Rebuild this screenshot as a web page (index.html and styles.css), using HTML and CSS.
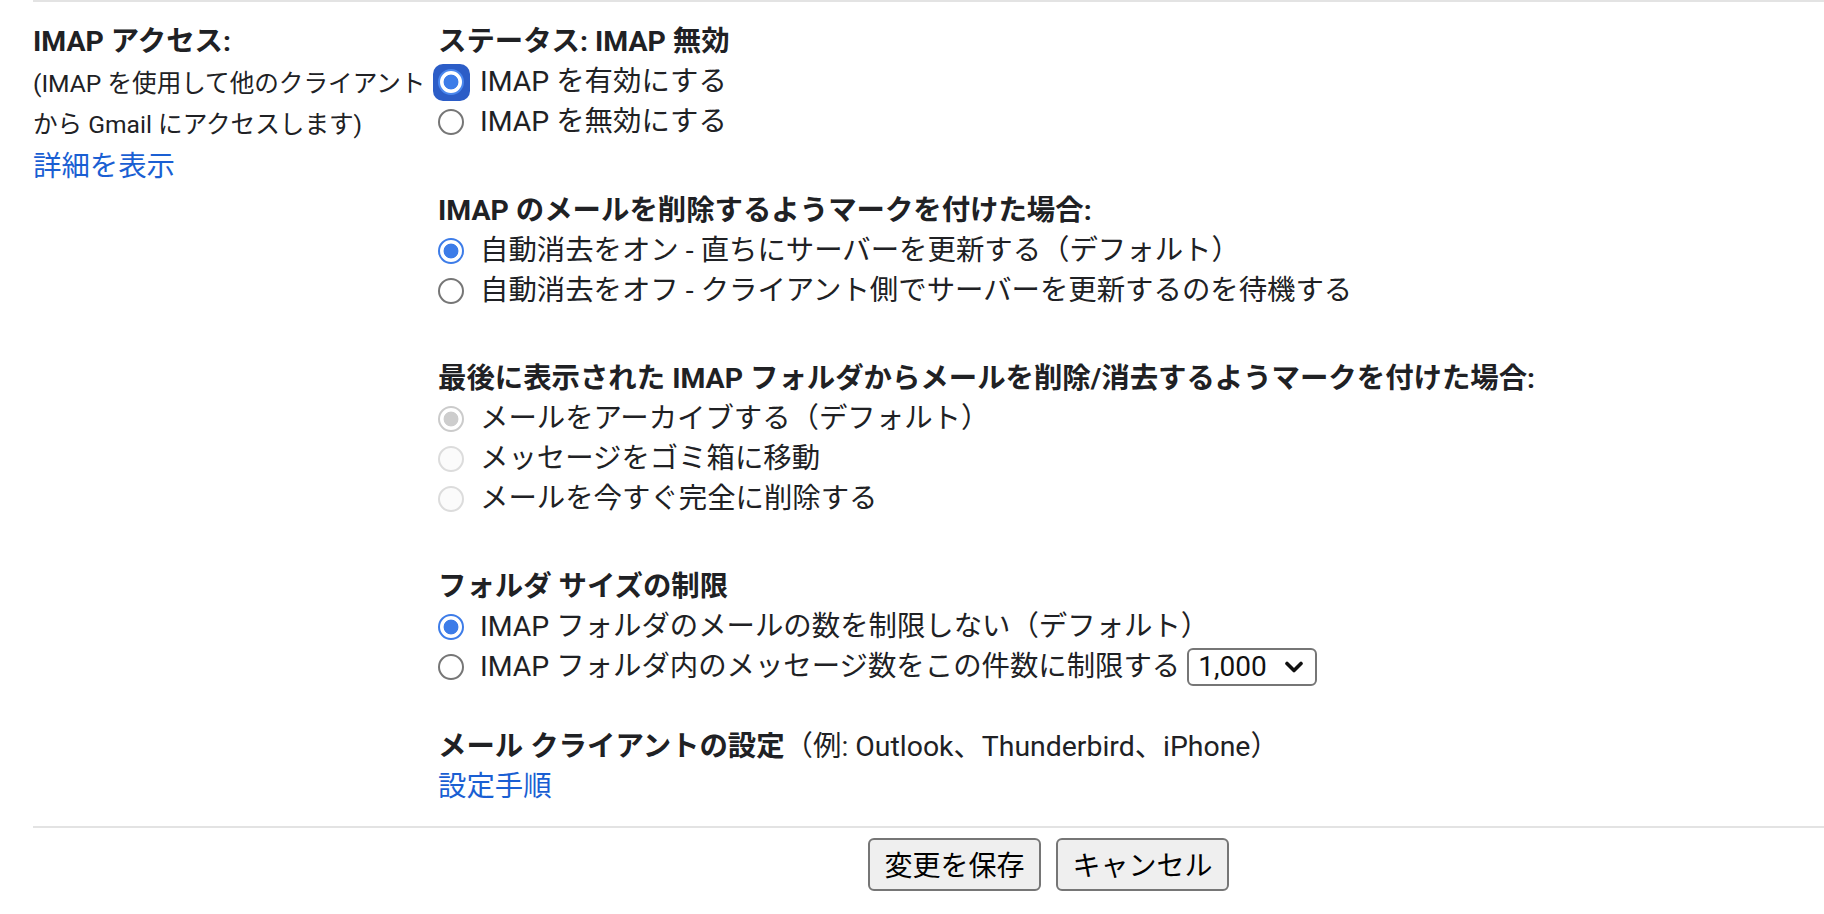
FILE: index.html
```html
<!DOCTYPE html>
<html lang="ja">
<head>
<meta charset="utf-8">
<title>IMAP 設定</title>
<link rel="stylesheet" href="styles.css">
</head>
<body>
<div class="page">
  <div class="setting">
    <div class="label-col">
      <div class="label-title">IMAP アクセス:</div>
      <div class="label-desc">(IMAP を使用して他のクライアント<br>から Gmail にアクセスします)</div>
      <a class="link" href="#">詳細を表示</a>
    </div>
    <div class="value-col">
      <div class="group group-first">
        <div class="heading">ステータス: IMAP 無効</div>
        <div class="opt"><span class="focus"><span class="radio checked"></span></span><span>IMAP を有効にする</span></div>
        <div class="opt"><span class="radio"></span><span>IMAP を無効にする</span></div>
      </div>
      <div class="group">
        <div class="heading">IMAP のメールを削除するようマークを付けた場合:</div>
        <div class="opt"><span class="radio checked"></span><span>自動消去をオン - 直ちにサーバーを更新する（デフォルト）</span></div>
        <div class="opt"><span class="radio"></span><span>自動消去をオフ - クライアント側でサーバーを更新するのを待機する</span></div>
      </div>
      <div class="group">
        <div class="heading">最後に表示された IMAP フォルダからメールを削除/消去するようマークを付けた場合:</div>
        <div class="opt"><span class="radio disabled checked"></span><span>メールをアーカイブする（デフォルト）</span></div>
        <div class="opt"><span class="radio disabled"></span><span>メッセージをゴミ箱に移動</span></div>
        <div class="opt"><span class="radio disabled"></span><span>メールを今すぐ完全に削除する</span></div>
      </div>
      <div class="group group-last">
        <div class="heading">フォルダ サイズの制限</div>
        <div class="opt"><span class="radio checked"></span><span>IMAP フォルダのメールの数を制限しない（デフォルト）</span></div>
        <div class="opt"><span class="radio"></span><span>IMAP フォルダ内のメッセージ数をこの件数に制限する</span>
          <div class="select"><span class="select-value">1,000</span>
            <svg class="chevron" width="18" height="12" viewBox="0 0 18 12"><path d="M2 2.5 L9 9.5 L16 2.5" fill="none" stroke="#111" stroke-width="3.6" stroke-linecap="round" stroke-linejoin="round"/></svg>
          </div>
        </div>
      </div>
      <div class="group client">
        <div class="heading-line"><span class="bold">メール クライアントの設定</span>（例: Outlook、Thunderbird、iPhone）</div>
        <a class="link" href="#">設定手順</a>
      </div>
    </div>
  </div>
  <div class="footer">
    <button class="btn" type="button">変更を保存</button>
    <button class="btn" type="button">キャンセル</button>
  </div>
</div>
</body>
</html>
```

FILE: styles.css
```css
html, body {
  margin: 0;
  padding: 0;
  background: #ffffff;
}

body {
  font-family: Roboto, "Noto Sans CJK JP", sans-serif;
  color: #202124;
}

.page {
  margin-left: 33px;
  border-top: 2px solid #e3e3e3;
}

.setting {
  display: grid;
  grid-template-columns: 405px 1fr;
  padding-top: 20px;
  padding-bottom: 19px;
}

.label-title {
  font-size: 28.4px;
  font-weight: 700;
  line-height: 40px;
}

.label-desc {
  font-size: 24.6px;
  line-height: 41px;
  margin-top: 1px;
}

.link {
  display: block;
  font-size: 28.4px;
  line-height: 40px;
  color: #1a5fd3;
  text-decoration: none;
}

.label-col .link {
  margin-top: 2px;
}

.group {
  margin-bottom: 48px;
}

.group-first {
  margin-bottom: 49px;
}

.group-last {
  margin-bottom: 40px;
}

.client {
  margin-bottom: 0;
}

.heading {
  font-size: 28.4px;
  font-weight: 700;
  line-height: 40px;
}

.heading-line {
  font-size: 28.4px;
  line-height: 40px;
}

.bold {
  font-weight: 700;
}

.opt {
  display: flex;
  align-items: center;
  height: 40px;
  font-size: 28.4px;
  line-height: 40px;
  white-space: nowrap;
}

.radio {
  box-sizing: border-box;
  flex: none;
  width: 26px;
  height: 26px;
  margin-right: 16px;
  border-radius: 50%;
  border: 2px solid #767676;
  background: #ffffff;
}

.radio.checked {
  border-color: #3d7ce8;
  background: radial-gradient(circle, #3d7ce8 0 7px, #ffffff 7.8px);
}

.radio.disabled {
  border-color: #dcdcdc;
  background: #fbfbfb;
}

.radio.disabled.checked {
  border-color: #cbcbcb;
  background: radial-gradient(circle, #cdcdcd 0 7px, #ffffff 7.8px);
}

.focus {
  flex: none;
  display: flex;
  align-items: center;
  justify-content: center;
  width: 37px;
  height: 37px;
  margin: 0 10.5px 0 -5.5px;
  border-radius: 10px;
  background: #2c5dc7;
}

.focus .radio {
  margin-right: 0;
  border-color: #4a87ee;
}

.select {
  box-sizing: border-box;
  display: flex;
  align-items: center;
  justify-content: space-between;
  width: 130px;
  height: 38px;
  margin-left: 7px;
  padding: 0 12px 0 9px;
  border: 2px solid #767676;
  border-radius: 6px;
  background: #ffffff;
  font-size: 28px;
  line-height: 34px;
  color: #111111;
}

.chevron {
  display: block;
}

.footer {
  display: flex;
  gap: 15px;
  padding: 10px 0 0 835px;
  border-top: 2px solid #e3e3e3;
}

.btn {
  box-sizing: border-box;
  height: 53px;
  width: 173px;
  padding: 0 12px;
  border: 2px solid #767676;
  border-radius: 6px;
  background: #efefef;
  font-family: "Noto Sans CJK JP", sans-serif;
  font-size: 28px;
  line-height: 49px;
  color: #000000;
}
```
